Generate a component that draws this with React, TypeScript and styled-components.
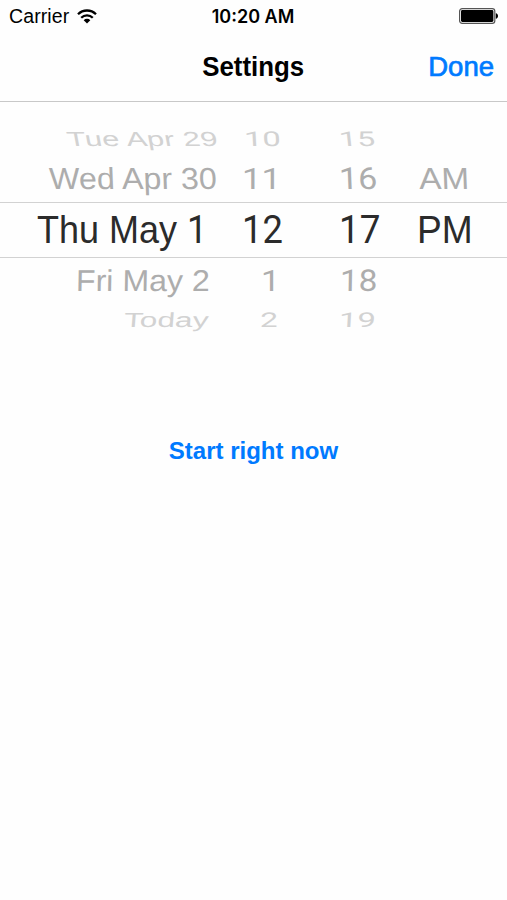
import React from "react";
import styled, { createGlobalStyle } from "styled-components";

const sans = '"Liberation Sans", Arial, sans-serif';
const numeric = 'Roboto, "Liberation Sans", sans-serif';

const GlobalStyle = createGlobalStyle`
  body { margin: 0; background: #fff; font-family: ${sans}; color: #000; }
  button { border: 0; padding: 0; background: none; font-family: inherit; }
`;

const Screen = styled.div`
  width: 507px;
  height: 900px;
  overflow: hidden;
  display: flex;
  flex-direction: column;
  background: #fefefe;
`;

const StatusBar = styled.div`
  height: 32px;
  flex: none;
  display: grid;
  grid-template-columns: 1fr auto 1fr;
  grid-template-rows: 32px;
  align-items: center;
  padding: 0 9px;
  box-sizing: border-box;
`;

const Signal = styled.div`
  display: flex;
  align-items: center;
  gap: 8px;
`;

const Carrier = styled.span`
  font-size: 19.5px;
  line-height: 32px;
  letter-spacing: 0.1px;
`;

const Clock = styled.span`
  font: 600 18px/30px Inter, ${sans};
  padding: 2px 1px 0 0;
`;

const BatteryIcon = styled.svg`
  justify-self: end;
`;

const NavBar = styled.header`
  height: 70px;
  flex: none;
  box-sizing: border-box;
  border-bottom: 1px solid #c8c8c8;
  display: grid;
  grid-template-columns: 1fr auto 1fr;
  align-items: center;
  padding: 0 13px;
`;

const Title = styled.h1`
  grid-column: 2;
  margin: 0;
  font-size: 27.5px;
  line-height: 69px;
  transform: scaleX(0.94);
`;

const DoneButton = styled.button`
  justify-self: end;
  color: #007aff;
  font-size: 27.5px;
  line-height: 69px;
  -webkit-text-stroke: 0.7px #007aff;
`;

const Picker = styled.div`
  padding-top: 21px;
  height: 234px;
  flex: none;
  box-sizing: border-box;
`;

const Wheel = styled.div<{ $height: number; $color: string; $selected?: boolean }>`
  box-sizing: border-box;
  height: ${(p) => p.$height}px;
  line-height: ${(p) => p.$height - (p.$selected ? 2 : 0)}px;
  color: ${(p) => p.$color};
  border: solid #d2d2d2;
  border-width: ${(p) => (p.$selected ? "1px 0" : "0")};
  display: grid;
  grid-template-columns: 240px 98px 78px 91px;
`;

const Cell = styled.span<{ $indent: number; $sx: number; $sy: number; $skew?: number; $numeric?: boolean }>`
  justify-self: start;
  margin-left: ${(p) => p.$indent}px;
  font-family: ${(p) => (p.$numeric ? numeric : sans)};
  font-size: 38.5px;
  white-space: pre;
  transform-origin: 0 50%;
  transform: scale(${(p) => p.$sx}, ${(p) => p.$sy}) skewX(${(p) => p.$skew ?? 0}deg);
`;

const Digit = styled.span`
  font-family: ${numeric};
`;

const StartButton = styled.button`
  align-self: center;
  margin-top: 97px;
  color: #007aff;
  font-size: 24px;
  font-weight: 700;
  line-height: 36px;
`;

type Item = { text: React.ReactNode; indent: number; sx: number; skew?: number };
type Row = { height: number; color: string; sy: number; selected?: boolean; items: Item[] };

const rows: Row[] = [
  {
    height: 32, color: "#d2d2d2", sy: 0.53,
    items: [
      { text: "Tue Apr 29", indent: 67.2, sx: 0.805, skew: 7 },
      { text: "10", indent: 3.5, sx: 0.853, skew: 2 },
      { text: "15", indent: 0.5, sx: 0.836, skew: 4 },
    ],
  },
  {
    height: 47, color: "#adadad", sy: 0.79,
    items: [
      { text: "Wed Apr 30", indent: 49, sx: 0.837, skew: 2 },
      { text: "11", indent: 2.2, sx: 0.904 },
      { text: "16", indent: 1.2, sx: 0.883, skew: 2 },
      { text: "AM", indent: 2.6, sx: 0.866, skew: 2 },
    ],
  },
  {
    height: 56, color: "#2b2b2b", sy: 1, selected: true,
    items: [
      { text: <>Thu May <Digit>1</Digit></>, indent: 36.5, sx: 0.935 },
      { text: "12", indent: 2.1, sx: 0.943 },
      { text: "17", indent: 1, sx: 0.955 },
      { text: "PM", indent: 0.5, sx: 0.965 },
    ],
  },
  {
    height: 46, color: "#adadad", sy: 0.78,
    items: [
      { text: "Fri May 2", indent: 76.3, sx: 0.834, skew: -1 },
      { text: "1", indent: 20.5, sx: 0.88 },
      { text: "18", indent: 2, sx: 0.866, skew: -1 },
    ],
  },
  {
    height: 32, color: "#d2d2d2", sy: 0.53,
    items: [
      { text: "Today", indent: 124.4, sx: 0.823, skew: -3 },
      { text: "2", indent: 19.7, sx: 0.82, skew: -2 },
      { text: "19", indent: 0.8, sx: 0.855, skew: -2 },
    ],
  },
];

export default function App() {
  return (
    <Screen>
      <GlobalStyle />
      <StatusBar>
        <Signal>
          <Carrier>Carrier</Carrier>
          <svg width="20" height="15" viewBox="0 0 20 15" fill="none" stroke="#000" strokeWidth="2.3">
            <path d="M1 5.2a12.8 12.8 0 0 1 18 0" />
            <path d="M4.2 8.7a8.3 8.3 0 0 1 11.6 0" />
            <path d="M10 14.4 6.7 11.2a4.7 4.7 0 0 1 6.6 0z" fill="#000" stroke="none" />
          </svg>
        </Signal>
        <Clock>10:20 AM</Clock>
        <BatteryIcon width="39" height="16" viewBox="0 0 39 16">
          <rect x="0.6" y="0.6" width="35.2" height="14.8" rx="2.6" fill="#fff" stroke="#555" strokeWidth="1.2" />
          <rect x="2" y="2" width="32.4" height="12" rx="1.4" />
          <path d="M36.8 5.2c1.4.2 2.2 1.4 2.2 2.8s-.8 2.6-2.2 2.8z" />
        </BatteryIcon>
      </StatusBar>
      <NavBar>
        <Title>Settings</Title>
        <DoneButton>Done</DoneButton>
      </NavBar>
      <Picker>
        {rows.map((row, r) => (
          <Wheel key={r} $height={row.height} $color={row.color} $selected={row.selected}>
            {row.items.map((item, c) => (
              <Cell key={c} $indent={item.indent} $sx={item.sx} $sy={row.sy} $skew={item.skew} $numeric={c === 1 || c === 2}>
                {item.text}
              </Cell>
            ))}
          </Wheel>
        ))}
      </Picker>
      <StartButton>Start right now</StartButton>
    </Screen>
  );
}
